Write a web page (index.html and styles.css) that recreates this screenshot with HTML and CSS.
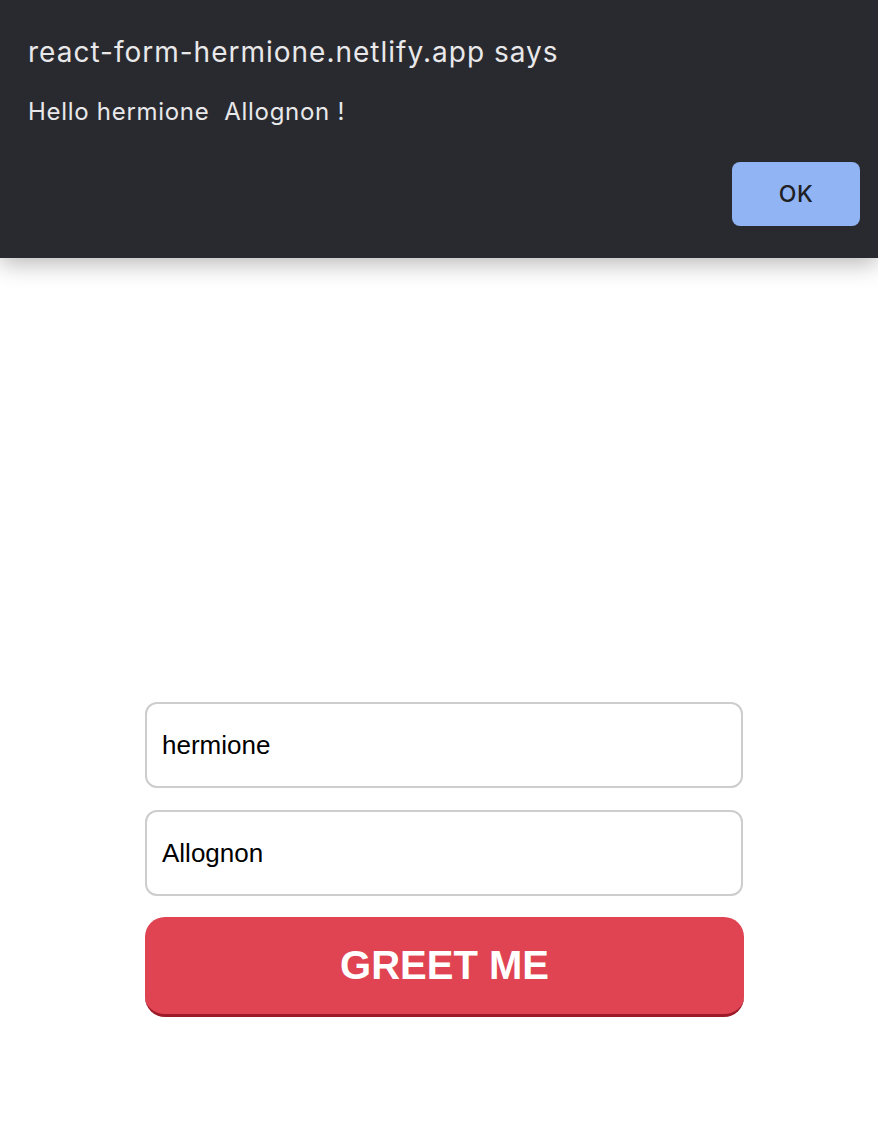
FILE: index.html
```html
<!DOCTYPE html>
<html lang="en">
<head>
<meta charset="utf-8">
<title>React Form</title>
<link rel="stylesheet" href="styles.css">
</head>
<body>
<main class="page">
  <form class="greet-form">
    <input class="field" type="text" value="hermione">
    <input class="field" type="text" value="Allognon">
    <button class="greet-btn" type="button">GREET ME</button>
  </form>
</main>
<div class="alert">
  <div class="alert-title">react-form-hermione.netlify.app says</div>
  <div class="alert-msg">Hello hermione&nbsp; Allognon !</div>
  <div class="alert-actions">
    <button class="ok-btn" type="button">OK</button>
  </div>
</div>
</body>
</html>
```
FILE: styles.css
```css
html, body {
  margin: 0;
  padding: 0;
  background: #ffffff;
}
body {
  width: 878px;
  height: 1140px;
  overflow: hidden;
  position: relative;
  font-family: "Liberation Sans", Arial, sans-serif;
}
.page {
  padding-top: 702px;
}
.greet-form {
  margin-left: 145px;
  width: 599px;
  display: flex;
  flex-direction: column;
}
.field {
  box-sizing: border-box;
  width: 598px;
  height: 86px;
  border: 2px solid #cdcdcd;
  border-radius: 12px;
  padding: 0 15px;
  font-family: "Liberation Sans", Arial, sans-serif;
  font-size: 26px;
  color: #000;
  background: #fff;
  margin-bottom: 22px;
  outline: none;
}
.field + .field {
  margin-bottom: 21px;
}
.greet-btn {
  box-sizing: border-box;
  width: 599px;
  height: 100px;
  border: none;
  border-bottom: 3px solid #9c1a28;
  border-radius: 20px;
  background: #e04452;
  color: #fff;
  font-family: "Liberation Sans", Arial, sans-serif;
  font-weight: bold;
  font-size: 40px;
  padding: 0;
}
.alert {
  position: absolute;
  top: 0;
  left: 0;
  width: 878px;
  height: 258px;
  box-sizing: border-box;
  background: #292a2f;
  padding: 33px 18px 0 28px;
  box-shadow: 0 6px 22px rgba(0,0,0,0.28);
  font-family: Inter, "Noto Sans", sans-serif;
  color: #e8e8ea;
}
.alert-title {
  font-size: 28px;
  line-height: 38px;
  letter-spacing: 1px;
}
.alert-msg {
  font-size: 24px;
  line-height: 32px;
  letter-spacing: 0.7px;
  margin-top: 25px;
}
.alert-actions {
  display: flex;
  justify-content: flex-end;
  margin-top: 34px;
}
.ok-btn {
  width: 128px;
  height: 64px;
  border: none;
  border-radius: 8px;
  background: #91b4f4;
  color: #1f2023;
  font-family: Inter, "Noto Sans", sans-serif;
  font-size: 23px;
  font-weight: 500;
  letter-spacing: 0.5px;
}
```
